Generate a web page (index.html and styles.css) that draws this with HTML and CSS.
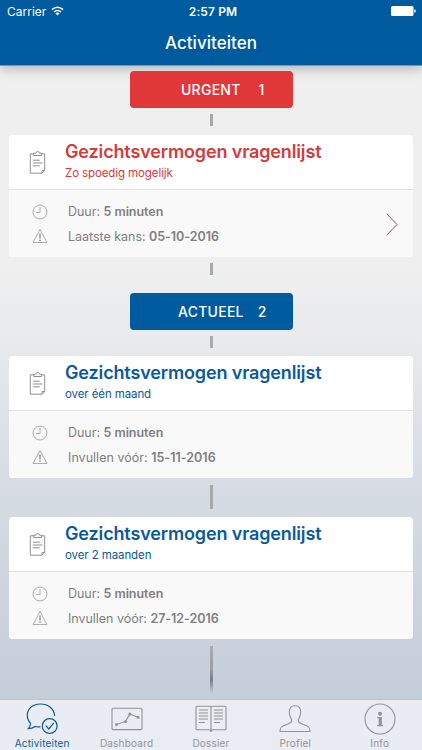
FILE: index.html
```html
<!DOCTYPE html>
<html lang="nl">
<head>
<meta charset="utf-8">
<title>Activiteiten</title>
<link rel="stylesheet" href="styles.css">
</head>
<body>
<svg class="defs" aria-hidden="true">
  <symbol id="clip" viewBox="0 0 18 24">
    <path d="M5 3.800H1.300v19.400h11.700l2.700-2.700V3.800H12.500M4.800 5.500V3.200h2Q7.200 1.500 8.700 1.500T10.600 3.200h2v2.300zM3.800 10.200h7M3.800 13h9.700M3.800 15.800h7M13 23.200v-2.700h2.700"/>
  </symbol>
  <symbol id="clock" viewBox="0 0 16 16">
    <circle cx="8" cy="8" r="7"/><path d="M8 3.200v5.300H4"/>
  </symbol>
  <symbol id="warn" viewBox="0 0 16 16">
    <path d="M8 1.500 15 14.500H1z"/><path class="mark" d="M8 5.500v5M8 11.500v1.500"/>
  </symbol>
</svg>
<div class="screen">
  <header class="header">
    <div class="status">
      <span class="carrier">Carrier</span>
      <svg class="wifi" viewBox="0 0 13 10"><path d="M.9 3.600Q6.500-1.200 12.100 3.600M3 5.900q3.500-2.900 7 0"/><path class="solid" d="M4.400 7.300q2.100-1.500 4.200 0L6.500 9.600z"/></svg>
      <span class="time">2:57 PM</span>
      <svg class="battery" viewBox="0 0 25 10"><rect width="22.500" height="10" rx="1.500"/><path d="M23.300 3.200q1.500.2 1.500 1.800t-1.500 1.800z"/></svg>
    </div>
    <h1>Activiteiten</h1>
  </header>
  <main class="timeline">
    <div class="pill urgent"><span>URGENT</span><span>1</span></div>
    <i class="link l1"></i>
    <article class="card urgent-card">
      <div class="head"><svg class="clip"><use href="#clip"/></svg><div><h2>Gezichtsvermogen vragenlijst</h2><p>Zo spoedig mogelijk</p></div></div>
      <div class="body">
        <div class="rows">
          <div class="row"><svg><use href="#clock"/></svg><span>Duur: <b>5 minuten</b></span></div>
          <div class="row"><svg><use href="#warn"/></svg><span>Laatste kans: <b>05-10-2016</b></span></div>
        </div>
        <svg class="chevron" viewBox="0 0 12 23"><path d="M.7.800 11 11.500.7 22.200"/></svg>
      </div>
    </article>
    <i class="link l2"></i>
    <div class="pill current"><span>ACTUEEL</span><span>2</span></div>
    <i class="link l3"></i>
    <article class="card">
      <div class="head"><svg class="clip"><use href="#clip"/></svg><div><h2>Gezichtsvermogen vragenlijst</h2><p>over één maand</p></div></div>
      <div class="body">
        <div class="rows">
          <div class="row"><svg><use href="#clock"/></svg><span>Duur: <b>5 minuten</b></span></div>
          <div class="row"><svg><use href="#warn"/></svg><span class="wide">Invullen vóór: <b>15-11-2016</b></span></div>
        </div>
      </div>
    </article>
    <i class="link l4"></i>
    <article class="card">
      <div class="head"><svg class="clip"><use href="#clip"/></svg><div><h2>Gezichtsvermogen vragenlijst</h2><p>over 2 maanden</p></div></div>
      <div class="body">
        <div class="rows">
          <div class="row"><svg><use href="#clock"/></svg><span>Duur: <b>5 minuten</b></span></div>
          <div class="row"><svg><use href="#warn"/></svg><span>Invullen vóór: <b>27-12-2016</b></span></div>
        </div>
      </div>
    </article>
    <i class="link l5"></i>
  </main>
  <nav class="tabs">
    <a class="tab active"><svg viewBox="0 0 32 34"><path d="M14.500 24.800Q11.500 25.200 9.200 24.500 6 26.600 2.300 26.700 4.600 24.300 4.600 21.300 1.300 18 1.300 13.200C1.300 6.500 7 2 14.500 2S28.300 6.500 28.600 14"/><circle cx="23.700" cy="24" r="7.400"/><path d="m19.800 23.700 3 3.300 5-6.200"/></svg><span>Activiteiten</span></a>
    <a class="tab"><svg viewBox="0 0 32 34"><rect x="1" y="6.300" width="30" height="21.300" rx="1"/><path d="m5.500 22.400 9-3 4.500-7.200 8 3"/><g class="dots"><circle cx="5.500" cy="22.500" r="1.500"/><circle cx="14.500" cy="19.500" r="1.500"/><circle cx="18.800" cy="12" r="1.500"/><circle cx="27" cy="15.200" r="1.500"/></g></svg><span>Dashboard</span></a>
    <a class="tab"><svg viewBox="0 0 32 34"><path d="M16 5.500Q16 4.300 14.500 4.300H2Q1 4.300 1 5.300V26.700Q1 27.700 2 27.700H14q2 0 2 2.300 0-2.300 2-2.300h12q1 0 1-1V5.300q0-1-1-1H17.500Q16 4.300 16 5.500V30M4 8h9M4 11h9M4 14h9M4 17h9M4 20.500h6M19 8h9M19 11h9M19 14h9M19 17h9M19 20.500h6"/></svg><span>Dossier</span></a>
    <a class="tab"><svg viewBox="0 0 32 34"><path d="M1 29.500h30c0-3.800-.8-4.600-3-5.500l-5.500-2.200c-2.500-1-3.200-2-3.200-3.300 0-1.600 2.400-4 2.400-8.200C21.700 6 20 3.800 16 3.800s-5.700 2.200-5.700 6.500c0 4.200 2.400 6.600 2.400 8.200 0 1.300-.7 2.300-3.200 3.300L4 24c-2.200.9-3 1.700-3 5.500z"/></svg><span>Profiel</span></a>
    <a class="tab"><svg viewBox="0 0 32 34"><circle cx="16" cy="17" r="15"/><circle class="fill" cx="16" cy="11.700" r="2"/><path class="fill" d="M13.300 15h4.500v8h1.300v1.300h-6V23h1.600v-6.700h-1.400z"/></svg><span>Info</span></a>
  </nav>
</div>
</body>
</html>
```
FILE: styles.css
```css
* { box-sizing: border-box; }
body { margin: 0; font-family: Inter, "Liberation Sans", sans-serif; }
h1, h2, p { margin: 0; }
.defs { position: absolute; width: 0; height: 0; }
svg { fill: none; flex: none; }
.screen { width: 422px; height: 750px; overflow: hidden; display: flex; flex-direction: column; background: linear-gradient(#efefef 0, #efefef 265px, #e8eaec 340px, #d8dde5 470px, #cdd3dd 600px, #c4ced9 700px); }
.header { height: 66px; flex: none; background: #005a9e; border-bottom: 1px solid #5f9dca; box-shadow: 0 2px 12px rgba(0,0,0,.28); color: #fff; text-align: center; }
.status { height: 22px; display: grid; grid-template-columns: 46px 13px 1fr 25px; align-items: center; padding: 0 6px 0 7px; font-size: 12px; }
.carrier { text-align: left; letter-spacing: 0; }
.wifi { width: 13px; height: 10px; stroke: #fff; stroke-width: 1.5; margin-left: -2px; }
.wifi .solid { fill: #fff; stroke: none; }
.time { font-weight: 600; padding-right: 31px; letter-spacing: .1px; }
.battery { width: 25px; height: 10px; fill: #fff; }
h1 { font-size: 17px; line-height: 43px; font-weight: 500; letter-spacing: .05px; }
.timeline { flex: none; height: 633px; display: flex; flex-direction: column; align-items: center; padding-top: 5px; }
.pill { flex: none; width: 163px; height: 37px; border-radius: 4px; color: #fff; display: flex; align-items: center; font-size: 14px; font-weight: 500; letter-spacing: .25px; }
.urgent { background: #e03739; padding-left: 51.500px; gap: 18px; }
.current { background: #005a9e; padding-left: 48.500px; gap: 14px; }
.link { flex: none; width: 3px; background: #a8a9ab; }
.l1 { height: 12px; margin: 6px 0 9px; }
.l2 { height: 12px; margin: 6px 0 18px; }
.l3 { height: 12px; margin: 6px 0 8px; }
.l4 { height: 24px; margin: 7px 0 8px; }
.l5 { height: 47px; margin-top: 7px; background: linear-gradient(#aaa, #9c9ea1 50%, #75808c 72%, #c4ced9); }
.card { flex: none; width: 404px; height: 122px; border-radius: 4px; background: #fff; overflow: hidden; color: #0b5a9a; }
.urgent-card { color: #d43b3d; }
.head { height: 55px; display: flex; border-bottom: 1px solid #e0e1e3; padding-left: 20px; }
.clip { width: 18px; height: 24px; margin: 15px 18px 0 0; stroke: #858585; stroke-width: .9; }
h2 { font-size: 18px; line-height: 24px; font-weight: 600; letter-spacing: -.14px; margin-top: 5px; white-space: nowrap; }
p { font-size: 11.500px; line-height: 19px; letter-spacing: -.1px; }
.body { height: 67px; background: #f9f9f9; display: flex; justify-content: space-between; align-items: center; padding: 1px 15px 0 23px; }
.rows { display: grid; gap: 0; }
.row { height: 24.500px; display: flex; align-items: center; gap: 20px; color: #808080; font-size: 12.500px; letter-spacing: -.03px; white-space: nowrap; }
.wide { letter-spacing: .02px; }
.row svg { width: 16px; height: 16px; stroke: #999; stroke-width: .8; }
.mark { stroke-width: 1.5; }
b { font-weight: 600; }
.chevron { width: 12px; height: 23px; stroke: #e0393b; stroke-width: 1; }
.tabs { flex: none; height: 51px; background: linear-gradient(90deg, #e9edf3, #eaecf4); border-top: 1px solid #b9c4d1; display: grid; grid-template-columns: repeat(5, 84.400px); }
.tab { display: flex; flex-direction: column; align-items: center; color: #929294; font-size: 10px; line-height: 12px; padding-top: 2px; }
.tab svg { width: 32px; height: 34px; stroke: #929294; stroke-width: 1.100; }
.tab span { margin-top: 1px; letter-spacing: .2px; }
.active { color: #095b9c; }
.active svg { stroke: #095b9c; stroke-width: 1.200; }
.dots circle { fill: #929294; stroke: none; }
.tab .fill { fill: #929294; stroke: none; }
```
